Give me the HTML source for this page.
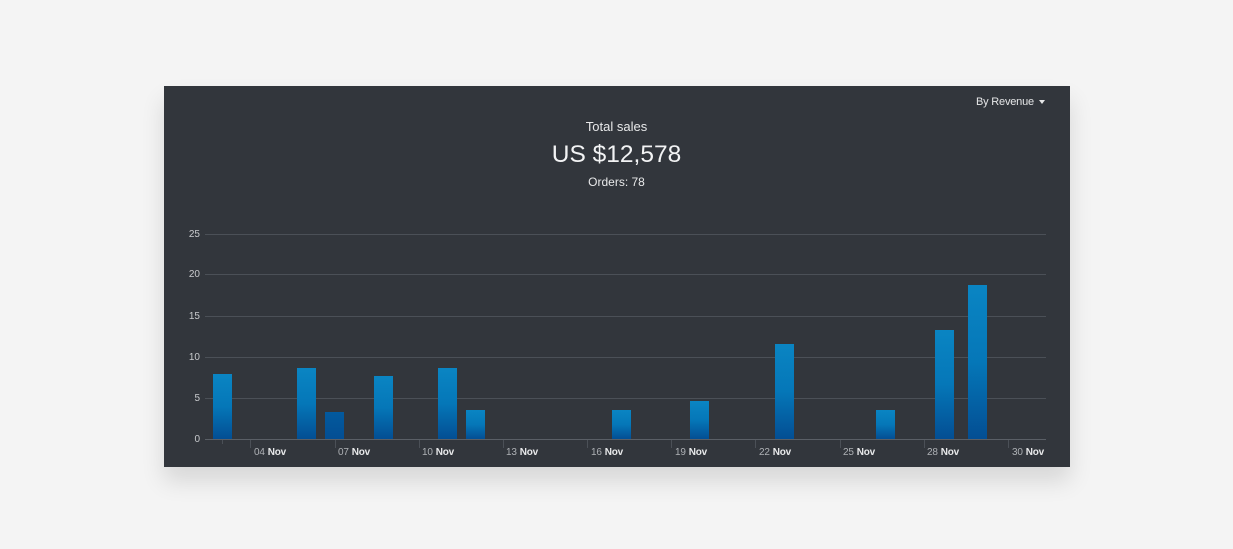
<!DOCTYPE html>
<html><head><style>
*{margin:0;padding:0;box-sizing:border-box}
body{width:1233px;height:549px;background:#f4f4f4;position:relative;overflow:hidden;font-family:"Liberation Sans",sans-serif}
.panel{position:absolute;left:164px;top:86px;width:906px;height:381px;background:#32363c;box-shadow:0 14px 22px rgba(0,0,0,0.12)}
.a{position:absolute}
.g{position:absolute;left:205px;width:841px;height:1px;background:#4b5057}
.y{position:absolute;left:182px;width:18px;text-align:right;font-size:10px;color:#c8cacd}
.b{position:absolute;width:19px;background:linear-gradient(#0a85c3,#0577b8 50%,#034e93)}
.t{position:absolute;top:440px;width:1px;height:8px;background:#4b5057}
.xl{position:absolute;top:447px;font-size:10px;color:#aeb1b5;white-space:nowrap;letter-spacing:-0.2px}
.xl b{color:#e8e9ea;font-weight:bold;margin-left:3px}
</style></head><body>
<div class="panel"></div>
<div class="a" style="left:976px;top:96px;font-size:11px;color:#e6e7e8;letter-spacing:-0.2px">By Revenue <span style="display:inline-block;width:0;height:0;border-left:3.5px solid transparent;border-right:3.5px solid transparent;border-top:4px solid #e6e7e8;vertical-align:middle;margin-left:2px"></span></div>
<div class="a" style="left:0;width:1233px;top:119px;text-align:center;font-size:13px;color:#e8e9ea">Total sales</div>
<div class="a" style="left:0;width:1233px;top:141px;text-align:center;font-size:24.5px;color:#f2f3f4">US $12,578</div>
<div class="a" style="left:0;width:1233px;top:175px;text-align:center;font-size:12px;color:#e8e9ea">Orders: 78</div>

<div class="g" style="top:234px"></div><div class="g" style="top:274px"></div><div class="g" style="top:316px"></div><div class="g" style="top:357px"></div><div class="g" style="top:398px"></div><div class="g" style="top:439px;background:#5a5f66"></div>
<div class="y" style="top:229px">25</div><div class="y" style="top:269px">20</div><div class="y" style="top:311px">15</div><div class="y" style="top:352px">10</div><div class="y" style="top:393px">5</div><div class="y" style="top:434px">0</div>

<div class="b" style="left:213px;top:374px;height:65px"></div>
<div class="b" style="left:297px;top:368px;height:71px"></div>
<div class="b" style="left:325px;top:412px;height:27px;background:linear-gradient(#035a9e,#034e93)"></div>
<div class="b" style="left:374px;top:376px;height:63px"></div>
<div class="b" style="left:438px;top:368px;height:71px"></div>
<div class="b" style="left:466px;top:410px;height:29px"></div>
<div class="b" style="left:612px;top:410px;height:29px"></div>
<div class="b" style="left:690px;top:401px;height:38px"></div>
<div class="b" style="left:775px;top:344px;height:95px"></div>
<div class="b" style="left:876px;top:410px;height:29px"></div>
<div class="b" style="left:935px;top:330px;height:109px"></div>
<div class="b" style="left:968px;top:285px;height:154px"></div>

<div class="t" style="left:222px;height:4px"></div>
<div class="t" style="left:250px"></div><div class="t" style="left:335px"></div><div class="t" style="left:419px"></div><div class="t" style="left:503px"></div><div class="t" style="left:587px"></div><div class="t" style="left:671px"></div><div class="t" style="left:755px"></div><div class="t" style="left:840px"></div><div class="t" style="left:924px"></div><div class="t" style="left:1008px"></div>
<div class="xl" style="left:254px">04<b>Nov</b></div>
<div class="xl" style="left:338px">07<b>Nov</b></div>
<div class="xl" style="left:422px">10<b>Nov</b></div>
<div class="xl" style="left:506px">13<b>Nov</b></div>
<div class="xl" style="left:591px">16<b>Nov</b></div>
<div class="xl" style="left:675px">19<b>Nov</b></div>
<div class="xl" style="left:759px">22<b>Nov</b></div>
<div class="xl" style="left:843px">25<b>Nov</b></div>
<div class="xl" style="left:927px">28<b>Nov</b></div>
<div class="xl" style="left:1012px">30<b>Nov</b></div>
</body></html>
